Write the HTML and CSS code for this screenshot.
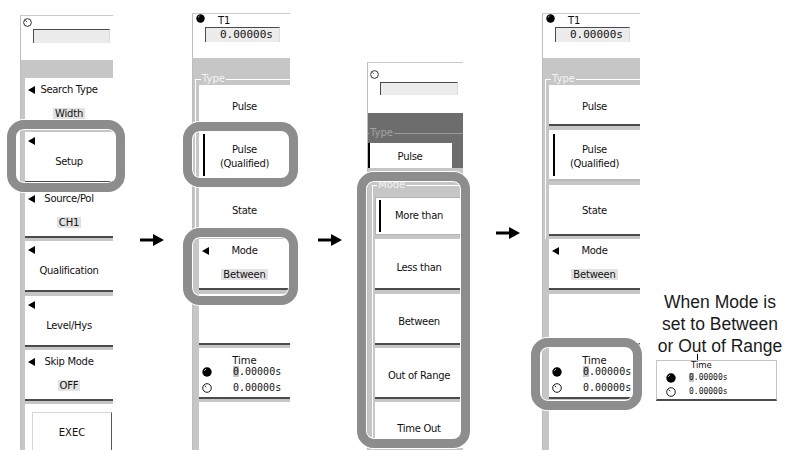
FILE: index.html
```html
<!DOCTYPE html>
<html lang="en">
<head>
    <meta charset="UTF-8">
    <meta name="viewport" content="width=device-width, initial-scale=1.0">
    <title>Search Setup - Pulse (Qualified) Mode</title>
    <link rel="stylesheet" href="styles.css">
</head>
<body>
    <svg class="defs" width="0" height="0" aria-hidden="true">
        <symbol id="knob-on" viewBox="0 0 10 10">
            <circle cx="5" cy="5" r="4.7" fill="#000"/>
            <path d="M2.4 3.6 L3.8 2.3" stroke="#fff" stroke-width="1"/>
        </symbol>
        <symbol id="knob-off" viewBox="0 0 10 10">
            <circle cx="5" cy="5" r="4.3" fill="#fff" stroke="#000" stroke-width="0.9"/>
            <path d="M2.7 2.7 L4.2 4.2" stroke="#000" stroke-width="0.9"/>
        </symbol>
    </svg>

    <div class="figure">
        <!-- step 1: search menu -->
        <div class="panel panel-search">
            <div class="panel-head head-entry">
                <svg class="knob"><use href="#knob-off"/></svg>
                <div class="entry"></div>
            </div>
            <div class="panel-body body-search">
                <div class="key key-pair">
                    <div class="key-row"><i class="tri"></i><span>Search Type</span></div>
                    <span class="val">Width</span>
                </div>
                <div class="key key-single"><i class="tri"></i><span>Setup</span></div>
                <div class="key key-pair">
                    <div class="key-row"><i class="tri"></i><span>Source/Pol</span></div>
                    <span class="val">CH1</span>
                </div>
                <div class="key key-single"><i class="tri"></i><span>Qualification</span></div>
                <div class="key key-single"><i class="tri"></i><span>Level/Hys</span></div>
                <div class="key key-pair">
                    <div class="key-row"><i class="tri"></i><span>Skip Mode</span></div>
                    <span class="val">OFF</span>
                </div>
                <div class="key key-exec"><div class="exec">EXEC</div></div>
            </div>
        </div>

        <div class="step step-1">
            <svg width="24" height="14" viewBox="0 0 24 14"><path d="M0 5.5H13V1L24 7L13 13V8.5H0Z" fill="#000"/></svg>
        </div>

        <!-- step 2: type menu -->
        <div class="panel panel-type">
            <div class="panel-head head-reading">
                <svg class="knob knob-small"><use href="#knob-on"/></svg>
                <div class="reading">
                    <span class="reading-name">T1</span>
                    <div class="entry entry-value">0.00000s</div>
                </div>
            </div>
            <div class="panel-body body-type">
                <fieldset class="group">
                    <legend>Type</legend>
                    <div class="key key-text key-first">Pulse</div>
                    <div class="key key-text sel">Pulse<br>(Qualified)</div>
                    <div class="key key-text">State</div>
                </fieldset>
                <div class="key key-pair key-out">
                    <div class="key-row"><i class="tri"></i><span>Mode</span></div>
                    <span class="val">Between</span>
                </div>
                <div class="key key-out"></div>
                <div class="key key-time key-out">
                    <span class="time-name">Time</span>
                    <div class="time-row"><svg class="knob"><use href="#knob-on"/></svg><span class="time-val"><b class="cursor">0</b>.00000s</span></div>
                    <div class="time-row"><svg class="knob"><use href="#knob-off"/></svg><span class="time-val">0.00000s</span></div>
                </div>
                <div class="key key-out key-end"></div>
            </div>
        </div>

        <div class="step step-2">
            <svg width="24" height="14" viewBox="0 0 24 14"><path d="M0 5.5H13V1L24 7L13 13V8.5H0Z" fill="#000"/></svg>
        </div>

        <!-- step 3: mode menu -->
        <div class="panel panel-mode">
            <div class="panel-head head-entry head-tall">
                <svg class="knob"><use href="#knob-off"/></svg>
                <div class="entry"></div>
            </div>
            <div class="dim">
                <fieldset class="group group-dim">
                    <legend>Type</legend>
                    <div class="key key-text key-dimmed sel">Pulse</div>
                </fieldset>
            </div>
            <div class="popup">
                <fieldset class="group">
                    <legend>Mode</legend>
                    <div class="key key-text key-more sel">More than</div>
                    <div class="key key-text">Less than</div>
                    <div class="key key-text">Between</div>
                    <div class="key key-text">Out of Range</div>
                    <div class="key key-text key-end">Time Out</div>
                </fieldset>
            </div>
        </div>

        <div class="step step-3">
            <svg width="24" height="14" viewBox="0 0 24 14"><path d="M0 5.5H13V1L24 7L13 13V8.5H0Z" fill="#000"/></svg>
        </div>

        <!-- step 4: result -->
        <div class="panel panel-type">
            <div class="panel-head head-reading">
                <svg class="knob knob-small"><use href="#knob-on"/></svg>
                <div class="reading">
                    <span class="reading-name">T1</span>
                    <div class="entry entry-value">0.00000s</div>
                </div>
            </div>
            <div class="panel-body body-type">
                <fieldset class="group">
                    <legend>Type</legend>
                    <div class="key key-text key-first">Pulse</div>
                    <div class="key key-text sel">Pulse<br>(Qualified)</div>
                    <div class="key key-text">State</div>
                </fieldset>
                <div class="key key-pair key-out">
                    <div class="key-row"><i class="tri"></i><span>Mode</span></div>
                    <span class="val">Between</span>
                </div>
                <div class="key key-out"></div>
                <div class="key key-time key-out">
                    <span class="time-name">Time</span>
                    <div class="time-row"><svg class="knob"><use href="#knob-on"/></svg><span class="time-val"><b class="cursor">0</b>.00000s</span></div>
                    <div class="time-row"><svg class="knob"><use href="#knob-off"/></svg><span class="time-val">0.00000s</span></div>
                </div>
                <div class="key key-out key-end"></div>
            </div>
        </div>

        <div class="note">
            <p class="note-text">When Mode is<br>set to Between<br>or Out of Range</p>
            <div class="note-pointer"></div>
            <div class="note-box">
                <span class="time-name">Time</span>
                <div class="time-row"><svg class="knob"><use href="#knob-on"/></svg><span class="time-val"><b class="cursor">0</b>.00000s</span></div>
                <div class="time-row"><svg class="knob"><use href="#knob-off"/></svg><span class="time-val">0.00000s</span></div>
            </div>
        </div>

        <!-- highlight rings -->
        <div class="ring ring-setup"></div>
        <div class="ring ring-qualified"></div>
        <div class="ring ring-mode"></div>
        <div class="ring ring-modes"></div>
        <div class="ring ring-time"></div>
    </div>
</body>
</html>
```

FILE: styles.css
```css
body {
    margin: 0;
    background: #fff;
    font-family: "DejaVu Sans", Verdana, sans-serif;
    font-size: 10px;
    color: #111;
}

.defs {
    position: absolute;
}

.figure {
    position: relative;
    display: flex;
    align-items: flex-start;
    width: 794px;
    height: 450px;
    padding-left: 20px;
    box-sizing: border-box;
    overflow: hidden;
}

/* menu panels */
.panel {
    flex: none;
    display: flex;
    flex-direction: column;
    height: 470px;
    background: #c6c6c6;
    border-top: 1px solid #cacaca;
    border-left: 1px solid #bdbdbd;
    box-sizing: border-box;
}
.panel-search {
    width: 93px;
    margin-top: 15px;
}
.panel-type {
    width: 98px;
    margin-top: 13px;
}
.panel-mode {
    width: 96px;
    margin-top: 62px;
}

.panel-head {
    flex: none;
    height: 44px;
    background: #fff;
    box-sizing: border-box;
}
.head-entry {
    padding: 2px 0 0 2px;
}
.head-tall {
    height: 50px;
    padding-top: 7px;
}
.head-reading {
    display: flex;
    align-items: flex-start;
    padding-left: 3px;
}

.knob {
    display: block;
    width: 9px;
    height: 9px;
}
.knob-small {
    width: 9px;
    height: 9px;
}

.entry {
    width: 77px;
    height: 14px;
    margin: 2px 0 0 10px;
    background: #ececec;
    border-top: 1px solid #4a4a4a;
    border-left: 1px solid #4a4a4a;
    border-right: 1px solid #dcdcdc;
    box-sizing: border-box;
}
.head-tall .entry {
    width: 78px;
    height: 13px;
    margin-top: 3px;
}

.reading {
    margin: 1px 0 0 0;
}
.reading-name {
    display: block;
    padding-left: 13px;
    line-height: 12px;
}
.entry-value {
    width: 75px;
    height: 15px;
    margin: 0;
    padding-left: 14px;
    font-family: "DejaVu Sans Mono", monospace;
    font-size: 11px;
    line-height: 14px;
    color: #111;
}

/* soft keys */
.panel-body {
    flex: 1;
}
.body-search {
    padding: 18px 0 0 4px;
}
.body-type {
    padding: 16px 0 0 2px;
}

.key {
    position: relative;
    flex: none;
    display: flex;
    flex-direction: column;
    align-items: center;
    height: 51px;
    margin-bottom: 3.4px;
    background: #fff;
    border-bottom: 2px solid #4b4b4b;
    box-sizing: border-box;
}
.key-pair {
    padding-top: 7px;
}
.key-row {
    align-self: stretch;
    display: grid;
    grid-template-columns: 14px 1fr 14px;
    line-height: 10px;
}
.key-row span {
    text-align: center;
    white-space: nowrap;
    letter-spacing: -0.3px;
}
.key-row .tri {
    margin: 1px 0 0 3px;
}
.val {
    margin-top: 13px;
    padding: 0 2px;
    line-height: 11px;
    background: #e2e2e2;
    letter-spacing: -0.2px;
}
.key-single {
    padding-top: 5px;
}
.key-single .tri {
    align-self: flex-start;
    margin-left: 3px;
}
.key-single span {
    margin-top: 12px;
    line-height: 10px;
    letter-spacing: -0.3px;
}
.tri {
    display: block;
    width: 0;
    height: 0;
    border-right: 7px solid #000;
    border-top: 4px solid transparent;
    border-bottom: 4px solid transparent;
}

.key-exec {
    flex: 1;
    align-items: stretch;
    padding-top: 8px;
    border-bottom: none;
}
.exec {
    height: 60px;
    margin: 0 1px 0 7px;
    padding-top: 15px;
    line-height: 10px;
    text-align: center;
    border-top: 1px solid #d6d6d6;
    border-left: 1px solid #d6d6d6;
    border-right: 1px solid #5a5a5a;
    box-sizing: border-box;
}

.key-text {
    justify-content: center;
    padding-top: 4px;
    line-height: 14px;
    text-align: center;
    letter-spacing: -0.3px;
}
.key-first {
    height: 41px;
    margin-bottom: 4.4px;
}
.key-out {
    margin-left: 4px;
}
.key-end {
    height: 60px;
    border-bottom: none;
}

.sel {
    border-bottom-color: #b8b8b8;
}
.sel::before {
    content: "";
    position: absolute;
    left: 4px;
    top: 4px;
    bottom: 3px;
    width: 2px;
    background: #000;
}

/* fieldset groups */
.group {
    min-width: 0;
    margin: 0;
    padding: 1px 0 0 3px;
    border: none;
    border-top: 1px solid #fff;
    border-left: 1px solid #fff;
}
.group legend {
    margin-left: 2px;
    padding: 0 1px;
    line-height: 10px;
    color: #f4f4f4;
}

.dim {
    flex: none;
    padding-top: 15px;
    background: #6d6d6d;
}
.group-dim {
    padding: 5px 11px 0 0;
    border-left: none;
    border-top-color: #9a9a9a;
}
.group-dim legend {
    margin-left: 1px;
    color: #a4a4a4;
}
.key-dimmed {
    height: 25px;
    margin-bottom: 0;
    padding-top: 3px;
    border-bottom: none;
}
.key-dimmed::before {
    left: 0;
    top: 0;
    bottom: 0;
}

.popup {
    flex: 1;
    padding: 12px 0 0 4px;
    background: #c6c6c6;
}
.popup .group {
    padding: 7px 0 0 2px;
}
.popup .key-text {
    padding-top: 8px;
}
.popup .key-end {
    height: 46px;
}
.key-more {
    height: 38px;
    margin-bottom: 4.2px;
    padding-top: 0 !important;
    border: 1px solid #b4b4b4;
}
.key-more::before {
    left: 3px;
    top: 2px;
    bottom: 2px;
}

/* time readout */
.key-time {
    align-items: stretch;
    padding-top: 8px;
}
.time-name {
    display: block;
    text-align: center;
    line-height: 10px;
}
.time-row {
    display: flex;
    align-items: center;
    height: 12px;
    padding-left: 3px;
}
.time-row + .time-row {
    margin-top: 4px;
}
.time-row .knob {
    width: 10px;
    height: 10px;
}
.time-val {
    margin-left: 21px;
    font-family: "DejaVu Sans Mono", monospace;
    font-size: 10px;
    line-height: 12px;
}
.cursor {
    font-weight: normal;
    background: #c4c4c4;
}

/* arrows between steps */
.step {
    flex: none;
    box-sizing: border-box;
}
.step svg {
    display: block;
}
.step-1 {
    width: 79px;
    padding: 233px 0 0 27px;
}
.step-2 {
    width: 77px;
    padding: 233px 0 0 28px;
}
.step-3 {
    width: 79px;
    padding: 226px 0 0 33px;
}

/* annotation */
.note {
    flex: none;
    display: flex;
    flex-direction: column;
    width: 154px;
    padding-top: 291px;
}
.note-text {
    margin: 0;
    padding-left: 6px;
    font-family: "Liberation Sans", Arial, sans-serif;
    font-size: 17.5px;
    line-height: 22px;
    text-align: center;
    color: #1a1a1a;
}
.note-pointer {
    width: 1px;
    height: 6px;
    margin: -3px 0 0 57px;
    background: #000;
}
.note-box {
    width: 121px;
    height: 41px;
    margin-left: 16px;
    background: #fff;
    border-top: 1px solid #c4c4c4;
    border-left: 1px solid #c4c4c4;
    border-right: 1px solid #c4c4c4;
    border-bottom: 2px solid #4b4b4b;
    box-sizing: border-box;
}
.note-box .time-name {
    padding-left: 34px;
    text-align: left;
    font-size: 8.5px;
    line-height: 9px;
}
.note-box .time-row {
    height: 11px;
    padding-left: 9px;
    margin-top: 2px;
}
.note-box .time-row + .time-row {
    margin-top: 3px;
}
.note-box .time-val {
    margin-left: 13px;
    font-size: 8px;
}

/* highlight rings */
.ring {
    position: absolute;
    z-index: 2;
    border: 9px solid #8d8d8d;
    border-radius: 17px;
    box-shadow: 0 0 0 1px #fff, inset 0 0 0 1px #fff;
    box-sizing: border-box;
}
.ring-setup {
    left: 7px;
    top: 120px;
    width: 118px;
    height: 72px;
}
.ring-qualified {
    left: 183px;
    top: 122px;
    width: 115px;
    height: 65px;
}
.ring-mode {
    left: 183px;
    top: 228px;
    width: 115px;
    height: 77px;
}
.ring-modes {
    left: 357px;
    top: 172px;
    width: 113px;
    height: 276px;
}
.ring-time {
    left: 531px;
    top: 338px;
    width: 111px;
    height: 72px;
}
```
